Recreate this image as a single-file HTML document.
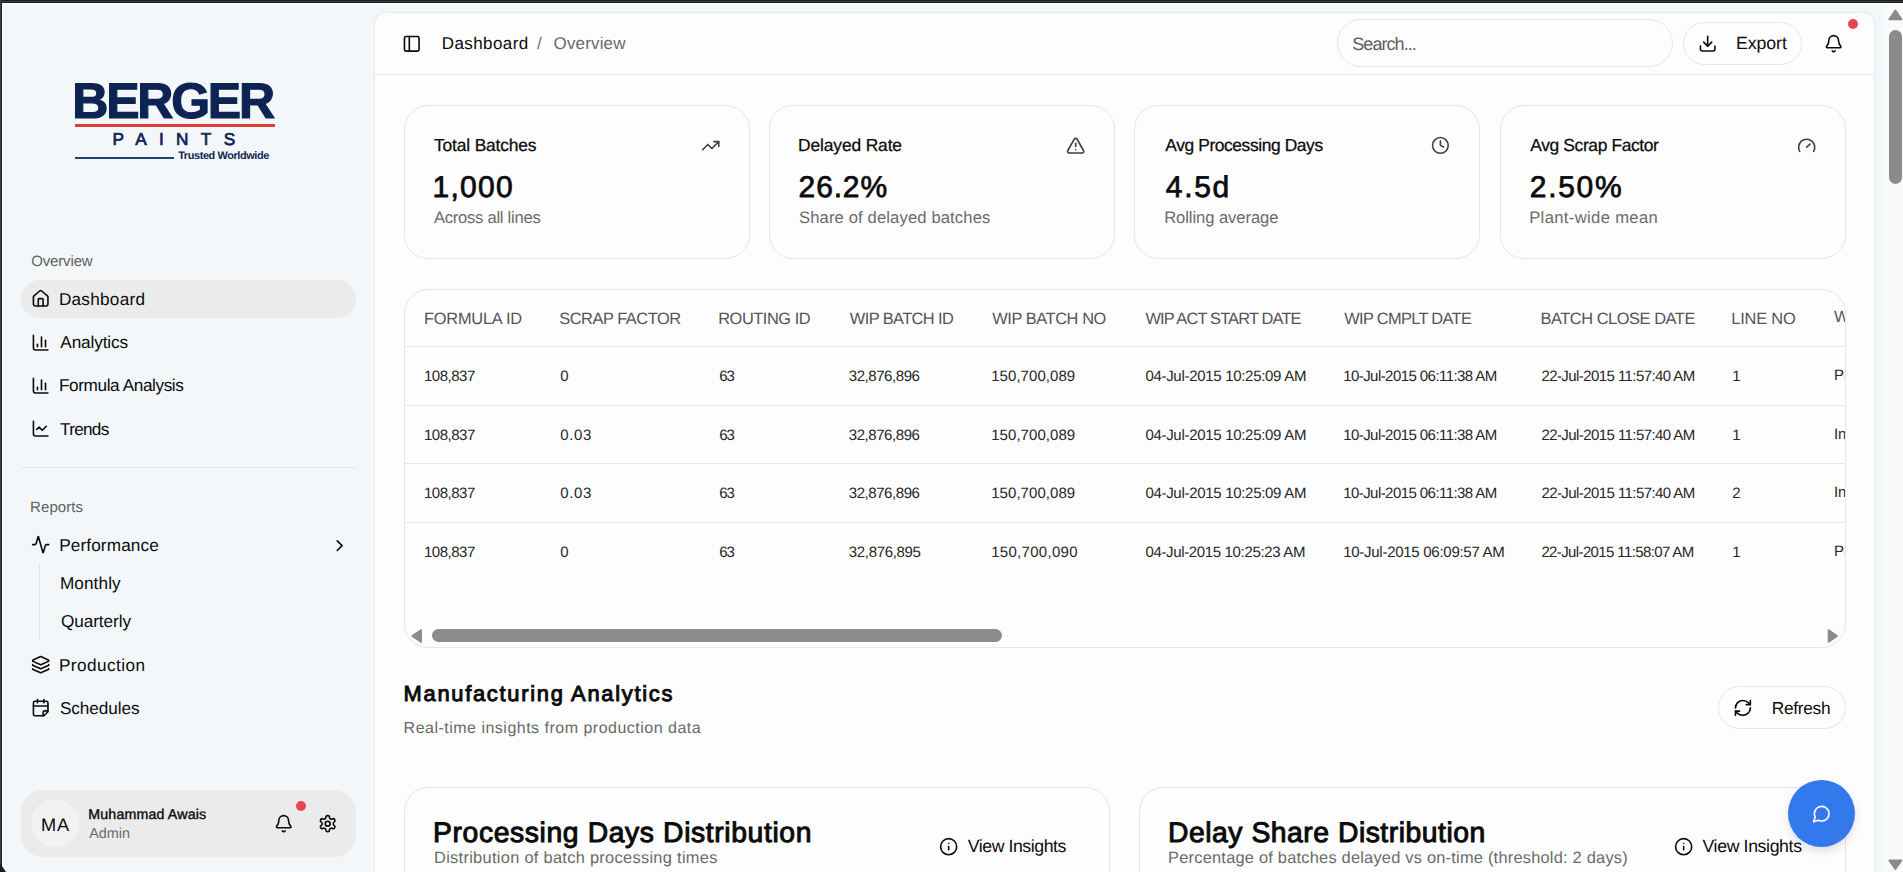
<!DOCTYPE html>
<html><head><meta charset="utf-8"><style>
html,body{margin:0;padding:0;}
body{width:1903px;height:872px;overflow:hidden;position:relative;background:#f4f7fa;font-family:"Liberation Sans",sans-serif;}
.abs{position:absolute;}
.t{position:absolute;white-space:nowrap;line-height:1;text-rendering:geometricPrecision;}
.ic{position:absolute;}
</style></head><body>
<div class="abs" style="left:374px;top:12px;width:1501px;height:900px;background:#fdfdfd;border:1px solid #eaebef;border-radius:12px;box-sizing:border-box;box-shadow:0 0 2px rgba(0,0,0,0.04)"></div>
<div class="abs" style="left:375px;top:74px;width:1499px;height:1px;background:#e6e6ee"></div>
<div class="abs" style="left:1884px;top:4px;width:19px;height:868px;background:#fafafa"></div>
<div class="abs" style="left:1889px;top:30px;width:13px;height:154px;background:#8b8b8b;border-radius:7px"></div>
<svg class="abs" style="left:1884px;top:4px" width="19" height="20"><path d="M11.4 6.6 L17.4 15.2 L5.4 15.2 Z" fill="#8b8b8b" stroke="#8b8b8b" stroke-width="2" stroke-linejoin="round"/></svg>
<svg class="abs" style="left:1884px;top:855px" width="19" height="17"><path d="M5.4 5.5 L17.4 5.5 L11.4 14 Z" fill="#8b8b8b" stroke="#8b8b8b" stroke-width="2" stroke-linejoin="round"/></svg>
<div class="abs" style="left:0;top:0;width:1903px;height:1px;background:#1e2022"></div>
<div class="abs" style="left:0;top:1px;width:1903px;height:1px;background:#3c3e3e"></div>
<div class="abs" style="left:0;top:2px;width:1903px;height:1px;background:#1b1c1e"></div>
<div class="abs" style="left:2px;top:3px;width:1901px;height:1px;background:#ffffff"></div>
<div class="abs" style="left:0;top:0;width:1px;height:872px;background:#3d3f3f"></div>
<div class="abs" style="left:1px;top:3px;width:1px;height:869px;background:#1f2123"></div>
<div class="abs" style="left:2px;top:3px;width:1px;height:869px;background:#ffffff"></div>
<svg class="abs" style="left:0;top:864px" width="8" height="8"><path d="M0 0 L2 0 L2 2 L6 8 L0 8 Z" fill="#1a1b1d"/></svg>
<svg class="ic" style="left:401.95px;top:33.75px;width:19.5px;height:19.5px;" viewBox="0 0 24 24" fill="none" stroke="#0b0b0b" stroke-width="2" stroke-linecap="round" stroke-linejoin="round"><rect width="18" height="18" x="3" y="3" rx="2"/><path d="M9 3v18"/></svg>
<div class="abs" style="left:1337px;top:19px;width:336px;height:48px;border:1px solid #e6e6e6;border-radius:24px;box-sizing:border-box;background:#fdfdfd"></div>
<div class="abs" style="left:1683px;top:22px;width:119px;height:43px;border:1px solid #e6e6e6;border-radius:22px;box-sizing:border-box;background:#fdfdfd"></div>
<svg class="ic" style="left:1697.82px;top:33.82px;width:19.36px;height:19.36px;" viewBox="0 0 24 24" fill="none" stroke="#0b0b0b" stroke-width="2" stroke-linecap="round" stroke-linejoin="round"><path d="M12 15V3"/><path d="M21 15v4a2 2 0 0 1-2 2H5a2 2 0 0 1-2-2v-4"/><path d="m7 10 5 5 5-5"/></svg>
<svg class="ic" style="left:1823.72px;top:33.92px;width:19.36px;height:19.36px;" viewBox="0 0 24 24" fill="none" stroke="#0b0b0b" stroke-width="2" stroke-linecap="round" stroke-linejoin="round"><path d="M10.268 21a2 2 0 0 0 3.464 0"/><path d="M3.262 15.326A1 1 0 0 0 4 17h16a1 1 0 0 0 .74-1.673C19.41 13.956 18 12.499 18 8A6 6 0 0 0 6 8c0 4.499-1.411 5.956-2.738 7.326"/></svg>
<div class="abs" style="left:1848px;top:18.8px;width:10px;height:10px;border-radius:50%;background:#e5484d"></div>
<div class="abs" style="left:21px;top:280px;width:335px;height:38px;border-radius:19px;background:#ebebeb"></div>
<svg class="ic" style="left:30.92px;top:288.52px;width:19.36px;height:19.36px;" viewBox="0 0 24 24" fill="none" stroke="#0b0b0b" stroke-width="2" stroke-linecap="round" stroke-linejoin="round"><path d="M15 21v-8a1 1 0 0 0-1-1h-4a1 1 0 0 0-1 1v8"/><path d="M3 10a2 2 0 0 1 .709-1.528l7-5.999a2 2 0 0 1 2.582 0l7 5.999A2 2 0 0 1 21 10v9a2 2 0 0 1-2 2H5a2 2 0 0 1-2-2z"/></svg>
<svg class="ic" style="left:30.92px;top:332.72px;width:19.36px;height:19.36px;" viewBox="0 0 24 24" fill="none" stroke="#0b0b0b" stroke-width="2" stroke-linecap="round" stroke-linejoin="round"><path d="M3 3v16a2 2 0 0 0 2 2h16"/><path d="M18 17V9"/><path d="M13 17V5"/><path d="M8 17v-3"/></svg>
<svg class="ic" style="left:30.92px;top:375.52px;width:19.36px;height:19.36px;" viewBox="0 0 24 24" fill="none" stroke="#0b0b0b" stroke-width="2" stroke-linecap="round" stroke-linejoin="round"><path d="M3 3v16a2 2 0 0 0 2 2h16"/><path d="M18 17V9"/><path d="M13 17V5"/><path d="M8 17v-3"/></svg>
<svg class="ic" style="left:30.92px;top:418.72px;width:19.36px;height:19.36px;" viewBox="0 0 24 24" fill="none" stroke="#0b0b0b" stroke-width="2" stroke-linecap="round" stroke-linejoin="round"><path d="M3 3v16a2 2 0 0 0 2 2h16"/><path d="m19 9-5 5-4-4-3 3"/></svg>
<div class="abs" style="left:21px;top:467px;width:335px;height:1px;background:#e3e6ea"></div>
<svg class="ic" style="left:30.82px;top:535.22px;width:19.36px;height:19.36px;" viewBox="0 0 24 24" fill="none" stroke="#0b0b0b" stroke-width="2" stroke-linecap="round" stroke-linejoin="round"><path d="M22 12h-2.48a2 2 0 0 0-1.93 1.46l-2.35 8.36a.25.25 0 0 1-.48 0L9.24 2.18a.25.25 0 0 0-.48 0l-2.35 8.36A2 2 0 0 1 4.49 12H2"/></svg>
<svg class="ic" style="left:330.22px;top:535.62px;width:19.36px;height:19.36px;" viewBox="0 0 24 24" fill="none" stroke="#0b0b0b" stroke-width="2" stroke-linecap="round" stroke-linejoin="round"><path d="m9 18 6-6-6-6"/></svg>
<div class="abs" style="left:39px;top:564px;width:1px;height:77px;background:#e2e4e8"></div>
<svg class="ic" style="left:30.92px;top:654.92px;width:19.36px;height:19.36px;" viewBox="0 0 24 24" fill="none" stroke="#0b0b0b" stroke-width="2" stroke-linecap="round" stroke-linejoin="round"><path d="M12.83 2.18a2 2 0 0 0-1.66 0L2.6 6.08a1 1 0 0 0 0 1.83l8.58 3.91a2 2 0 0 0 1.66 0l8.58-3.9a1 1 0 0 0 0-1.83z"/><path d="M2 12a1 1 0 0 0 .58.91l8.6 3.91a2 2 0 0 0 1.65 0l8.58-3.9A1 1 0 0 0 22 12"/><path d="M2 17a1 1 0 0 0 .58.91l8.6 3.91a2 2 0 0 0 1.65 0l8.58-3.9A1 1 0 0 0 22 17"/></svg>
<svg class="ic" style="left:31.02px;top:697.82px;width:19.36px;height:19.36px;" viewBox="0 0 24 24" fill="none" stroke="#0b0b0b" stroke-width="2" stroke-linecap="round" stroke-linejoin="round"><path d="M8 2v4"/><path d="M16 2v4"/><path d="M21 17V6a2 2 0 0 0-2-2H5a2 2 0 0 0-2 2v14a2 2 0 0 0 2 2h11Z"/><path d="M3 10h18"/><path d="M15 22v-4a2 2 0 0 1 2-2h4"/></svg>
<div class="abs" style="left:21px;top:790px;width:335px;height:67px;border-radius:22px;background:#ebebeb"></div>
<div class="abs" style="left:31px;top:799px;width:48px;height:48px;border-radius:50%;background:#f2f2f2"></div>
<svg class="ic" style="left:273.82px;top:814.02px;width:19.36px;height:19.36px;" viewBox="0 0 24 24" fill="none" stroke="#0b0b0b" stroke-width="2" stroke-linecap="round" stroke-linejoin="round"><path d="M10.268 21a2 2 0 0 0 3.464 0"/><path d="M3.262 15.326A1 1 0 0 0 4 17h16a1 1 0 0 0 .74-1.673C19.41 13.956 18 12.499 18 8A6 6 0 0 0 6 8c0 4.499-1.411 5.956-2.738 7.326"/></svg>
<svg class="ic" style="left:317.82px;top:814.02px;width:19.36px;height:19.36px;" viewBox="0 0 24 24" fill="none" stroke="#0b0b0b" stroke-width="2" stroke-linecap="round" stroke-linejoin="round"><path d="M12.22 2h-.44a2 2 0 0 0-2 2v.18a2 2 0 0 1-1 1.73l-.43.25a2 2 0 0 1-2 0l-.15-.08a2 2 0 0 0-2.73.73l-.22.38a2 2 0 0 0 .73 2.73l.15.1a2 2 0 0 1 1 1.72v.51a2 2 0 0 1-1 1.74l-.15.09a2 2 0 0 0-.73 2.73l.22.38a2 2 0 0 0 2.73.73l.15-.08a2 2 0 0 1 2 0l.43.25a2 2 0 0 1 1 1.73V20a2 2 0 0 0 2 2h.44a2 2 0 0 0 2-2v-.18a2 2 0 0 1 1-1.73l.43-.25a2 2 0 0 1 2 0l.15.08a2 2 0 0 0 2.73-.73l.22-.39a2 2 0 0 0-.73-2.73l-.15-.08a2 2 0 0 1-1-1.74v-.5a2 2 0 0 1 1-1.74l.15-.09a2 2 0 0 0 .73-2.73l-.22-.38a2 2 0 0 0-2.73-.73l-.15.08a2 2 0 0 1-2 0l-.43-.25a2 2 0 0 1-1-1.73V4a2 2 0 0 0-2-2z"/><circle cx="12" cy="12" r="3"/></svg>
<div class="abs" style="left:296px;top:801.4px;width:10px;height:10px;border-radius:50%;background:#e5484d"></div>
<div class="abs" style="left:75px;top:124px;width:199.5px;height:2.5px;background:#e23b3b"></div>
<div class="abs" style="left:75px;top:156.5px;width:99.2px;height:2.1px;background:#263f72"></div>
<div class="abs" style="left:404px;top:104.5px;width:346px;height:154px;border:1px solid #e5e5ee;border-radius:24px;box-sizing:border-box;background:#fdfdfd"></div>
<div class="abs" style="left:769px;top:104.5px;width:346px;height:154px;border:1px solid #e5e5ee;border-radius:24px;box-sizing:border-box;background:#fdfdfd"></div>
<div class="abs" style="left:1134px;top:104.5px;width:346px;height:154px;border:1px solid #e5e5ee;border-radius:24px;box-sizing:border-box;background:#fdfdfd"></div>
<div class="abs" style="left:1500px;top:104.5px;width:346px;height:154px;border:1px solid #e5e5ee;border-radius:24px;box-sizing:border-box;background:#fdfdfd"></div>
<svg class="ic" style="left:701.02px;top:135.82px;width:19.36px;height:19.36px;" viewBox="0 0 24 24" fill="none" stroke="#3f3f3f" stroke-width="2" stroke-linecap="round" stroke-linejoin="round"><path d="M16 7h6v6"/><path d="m22 7-8.5 8.5-5-5L2 17"/></svg>
<svg class="ic" style="left:1065.92px;top:135.72px;width:19.36px;height:19.36px;" viewBox="0 0 24 24" fill="none" stroke="#3f3f3f" stroke-width="2" stroke-linecap="round" stroke-linejoin="round"><path d="m21.73 18-8-14a2 2 0 0 0-3.48 0l-8 14A2 2 0 0 0 4 21h16a2 2 0 0 0 1.73-3"/><path d="M12 9v4"/><path d="M12 17h.01"/></svg>
<svg class="ic" style="left:1431.10px;top:136.00px;width:18.8px;height:18.8px;" viewBox="0 0 24 24" fill="none" stroke="#3f3f3f" stroke-width="2" stroke-linecap="round" stroke-linejoin="round"><circle cx="12" cy="12" r="10"/><path d="M12 6v6l4 2"/></svg>
<svg class="ic" style="left:1797.02px;top:135.72px;width:19.36px;height:19.36px;" viewBox="0 0 24 24" fill="none" stroke="#3f3f3f" stroke-width="2" stroke-linecap="round" stroke-linejoin="round"><path d="m12 14 4-4"/><path d="M3.34 19a10 10 0 1 1 17.32 0"/></svg>
<div class="abs" style="left:404px;top:288.5px;width:1442px;height:359.5px;border:1px solid #e5e5ee;border-radius:24px;box-sizing:border-box;background:#fdfdfd"></div>
<div class="abs" style="left:405px;top:346px;width:1440px;height:1px;background:#e6e6ee"></div>
<div class="abs" style="left:405px;top:404.8px;width:1440px;height:1px;background:#e6e6ee"></div>
<div class="abs" style="left:405px;top:463px;width:1440px;height:1px;background:#e6e6ee"></div>
<div class="abs" style="left:405px;top:522.4px;width:1440px;height:1px;background:#e6e6ee"></div>
<svg class="abs" style="left:404px;top:620px" width="1442" height="28"><path d="M8.2 16 L17.2 10 L17.2 22 Z" fill="#8b8b8b" stroke="#8b8b8b" stroke-width="1.6" stroke-linejoin="round"/><rect x="28" y="9" width="570" height="13" rx="6.5" fill="#8b8b8b"/><path d="M1433 16 L1424.5 10 L1424.5 22 Z" fill="#8b8b8b" stroke="#8b8b8b" stroke-width="1.6" stroke-linejoin="round"/></svg>
<div class="abs" style="left:1718px;top:686px;width:128px;height:43px;border:1px solid #e6e6e6;border-radius:22px;box-sizing:border-box;background:#fdfdfd"></div>
<svg class="ic" style="left:1732.80px;top:697.50px;width:19.8px;height:19.8px;" viewBox="0 0 24 24" fill="none" stroke="#0b0b0b" stroke-width="2" stroke-linecap="round" stroke-linejoin="round"><path d="M3 12a9 9 0 0 1 9-9 9.75 9.75 0 0 1 6.74 2.74L21 8"/><path d="M21 3v5h-5"/><path d="M21 12a9 9 0 0 1-9 9 9.75 9.75 0 0 1-6.74-2.74L3 16"/><path d="M8 16H3v5"/></svg>
<div class="abs" style="left:404px;top:787px;width:706px;height:200px;border:1px solid #e5e5ee;border-radius:24px;box-sizing:border-box;background:#fdfdfd"></div>
<div class="abs" style="left:1139px;top:787px;width:707px;height:200px;border:1px solid #e5e5ee;border-radius:24px;box-sizing:border-box;background:#fdfdfd"></div>
<svg class="ic" style="left:938.85px;top:836.85px;width:19.3px;height:19.3px;" viewBox="0 0 24 24" fill="none" stroke="#0b0b0b" stroke-width="2" stroke-linecap="round" stroke-linejoin="round"><circle cx="12" cy="12" r="10"/><path d="M12 16v-4"/><path d="M12 8h.01"/></svg>
<svg class="ic" style="left:1674.05px;top:836.85px;width:19.3px;height:19.3px;" viewBox="0 0 24 24" fill="none" stroke="#0b0b0b" stroke-width="2" stroke-linecap="round" stroke-linejoin="round"><circle cx="12" cy="12" r="10"/><path d="M12 16v-4"/><path d="M12 8h.01"/></svg>
<div class="t" id="bc1" style="left:441.80px;top:34.71px;font-size:17.0px;font-weight:400;color:#0b0b0b;letter-spacing:0.400px;">Dashboard</div>
<div class="t" id="bcsep" style="left:536.90px;top:34.91px;font-size:17.0px;font-weight:400;color:#6f6f6f;letter-spacing:0.000px;">/</div>
<div class="t" id="bc2" style="left:553.60px;top:34.61px;font-size:17.0px;font-weight:400;color:#6b6b6b;letter-spacing:0.143px;">Overview</div>
<div class="t" id="search" style="left:1352.30px;top:34.76px;font-size:18.0px;font-weight:400;color:#606060;letter-spacing:-0.944px;">Search...</div>
<div class="t" id="export" style="left:1735.90px;top:35.01px;font-size:17.7px;font-weight:400;color:#0b0b0b;letter-spacing:-0.040px;">Export</div>
<div class="t" id="berger" style="left:72.30px;top:75.86px;font-size:50.0px;font-weight:700;color:#0d2453;letter-spacing:-2.240px;-webkit-text-stroke:1.2px #0d2453;">BERGER</div>
<div class="t" id="paints" style="left:112.60px;top:131.44px;font-size:17.2px;font-weight:400;color:#0d2453;letter-spacing:12.360px;-webkit-text-stroke:0.7px #0d2453;">PAINTS</div>
<div class="t" id="trusted" style="left:178.20px;top:150.97px;font-size:10.9px;font-weight:700;color:#0d2453;letter-spacing:-0.383px;">Trusted Worldwide</div>
<div class="t" id="lbl_ov" style="left:31.20px;top:253.60px;font-size:15.0px;font-weight:400;color:#5e5e5e;letter-spacing:-0.142px;">Overview</div>
<div class="t" id="nav_dash" style="left:58.90px;top:290.94px;font-size:17.2px;font-weight:400;color:#0b0b0b;letter-spacing:0.250px;">Dashboard</div>
<div class="t" id="nav_an" style="left:60.30px;top:333.54px;font-size:17.2px;font-weight:400;color:#0b0b0b;letter-spacing:-0.125px;">Analytics</div>
<div class="t" id="nav_fa" style="left:59.00px;top:376.84px;font-size:17.2px;font-weight:400;color:#0b0b0b;letter-spacing:-0.400px;">Formula Analysis</div>
<div class="t" id="nav_tr" style="left:60.00px;top:420.54px;font-size:17.2px;font-weight:400;color:#0b0b0b;letter-spacing:-0.720px;">Trends</div>
<div class="t" id="lbl_rep" style="left:30.10px;top:499.60px;font-size:15.0px;font-weight:400;color:#5e5e5e;letter-spacing:0.068px;">Reports</div>
<div class="t" id="nav_perf" style="left:59.20px;top:536.54px;font-size:17.2px;font-weight:400;color:#0b0b0b;letter-spacing:0.120px;">Performance</div>
<div class="t" id="nav_mon" style="left:59.90px;top:575.44px;font-size:17.2px;font-weight:400;color:#0b0b0b;letter-spacing:0.099px;">Monthly</div>
<div class="t" id="nav_q" style="left:60.90px;top:613.44px;font-size:17.2px;font-weight:400;color:#0b0b0b;letter-spacing:-0.069px;">Quarterly</div>
<div class="t" id="nav_prod" style="left:58.90px;top:656.54px;font-size:17.2px;font-weight:400;color:#0b0b0b;letter-spacing:0.444px;">Production</div>
<div class="t" id="nav_sch" style="left:59.90px;top:699.74px;font-size:17.2px;font-weight:400;color:#0b0b0b;letter-spacing:-0.075px;">Schedules</div>
<div class="t" id="ma" style="left:41.00px;top:815.79px;font-size:18.2px;font-weight:400;color:#0b0b0b;letter-spacing:0.800px;">MA</div>
<div class="t" id="uname" style="left:88.30px;top:807.98px;font-size:14.2px;font-weight:400;color:#0b0b0b;letter-spacing:0.167px;-webkit-text-stroke:0.4px #0b0b0b;">Muhammad Awais</div>
<div class="t" id="urole" style="left:89.30px;top:826.91px;font-size:14.4px;font-weight:400;color:#6a6a6a;letter-spacing:-0.050px;">Admin</div>
<div class="t" id="c0t" style="left:434.00px;top:136.97px;font-size:17.4px;font-weight:400;color:#0b0b0b;letter-spacing:-0.153px;-webkit-text-stroke:0.25px #0b0b0b;">Total Batches</div>
<div class="t" id="c0v" style="left:432.50px;top:173.30px;font-size:30.0px;font-weight:400;color:#0b0b0b;letter-spacing:1.300px;-webkit-text-stroke:0.75px #0b0b0b;">1,000</div>
<div class="t" id="c0s" style="left:433.90px;top:210.04px;font-size:16.6px;font-weight:400;color:#6a6a6a;letter-spacing:-0.255px;">Across all lines</div>
<div class="t" id="c1t" style="left:798.10px;top:136.97px;font-size:17.4px;font-weight:400;color:#0b0b0b;letter-spacing:-0.130px;-webkit-text-stroke:0.25px #0b0b0b;">Delayed Rate</div>
<div class="t" id="c1v" style="left:798.60px;top:173.30px;font-size:30.0px;font-weight:400;color:#0b0b0b;letter-spacing:0.850px;-webkit-text-stroke:0.75px #0b0b0b;">26.2%</div>
<div class="t" id="c1s" style="left:799.00px;top:210.04px;font-size:16.6px;font-weight:400;color:#6a6a6a;letter-spacing:0.136px;">Share of delayed batches</div>
<div class="t" id="c2t" style="left:1165.30px;top:136.97px;font-size:17.4px;font-weight:400;color:#0b0b0b;letter-spacing:-0.399px;-webkit-text-stroke:0.25px #0b0b0b;">Avg Processing Days</div>
<div class="t" id="c2v" style="left:1165.80px;top:173.30px;font-size:30.0px;font-weight:400;color:#0b0b0b;letter-spacing:1.667px;-webkit-text-stroke:0.75px #0b0b0b;">4.5d</div>
<div class="t" id="c2s" style="left:1164.20px;top:210.04px;font-size:16.6px;font-weight:400;color:#6a6a6a;letter-spacing:-0.072px;">Rolling average</div>
<div class="t" id="c3t" style="left:1530.30px;top:136.97px;font-size:17.4px;font-weight:400;color:#0b0b0b;letter-spacing:-0.361px;-webkit-text-stroke:0.25px #0b0b0b;">Avg Scrap Factor</div>
<div class="t" id="c3v" style="left:1529.80px;top:173.30px;font-size:30.0px;font-weight:400;color:#0b0b0b;letter-spacing:1.700px;-webkit-text-stroke:0.75px #0b0b0b;">2.50%</div>
<div class="t" id="c3s" style="left:1529.20px;top:210.04px;font-size:16.6px;font-weight:400;color:#6a6a6a;letter-spacing:0.356px;">Plant-wide mean</div>
<div class="t" id="h0" style="left:424.00px;top:310.51px;font-size:16.4px;font-weight:400;color:#545454;letter-spacing:-0.222px;">FORMULA ID</div>
<div class="t" id="h1" style="left:559.20px;top:310.51px;font-size:16.4px;font-weight:400;color:#545454;letter-spacing:-0.454px;">SCRAP FACTOR</div>
<div class="t" id="h2" style="left:718.20px;top:310.51px;font-size:16.4px;font-weight:400;color:#545454;letter-spacing:-0.444px;">ROUTING ID</div>
<div class="t" id="h3" style="left:849.80px;top:310.51px;font-size:16.4px;font-weight:400;color:#545454;letter-spacing:-0.580px;">WIP BATCH ID</div>
<div class="t" id="h4" style="left:992.20px;top:310.51px;font-size:16.4px;font-weight:400;color:#545454;letter-spacing:-0.415px;">WIP BATCH NO</div>
<div class="t" id="h5" style="left:1145.40px;top:310.51px;font-size:16.4px;font-weight:400;color:#545454;letter-spacing:-0.836px;">WIP ACT START DATE</div>
<div class="t" id="h6" style="left:1344.20px;top:310.51px;font-size:16.4px;font-weight:400;color:#545454;letter-spacing:-0.666px;">WIP CMPLT DATE</div>
<div class="t" id="h7" style="left:1540.40px;top:310.51px;font-size:16.4px;font-weight:400;color:#545454;letter-spacing:-0.439px;">BATCH CLOSE DATE</div>
<div class="t" id="h8" style="left:1731.30px;top:310.51px;font-size:16.4px;font-weight:400;color:#545454;letter-spacing:-0.203px;">LINE NO</div>
<div class="t" id="r0c0" style="left:424.00px;top:369.30px;font-size:15.0px;font-weight:400;color:#262626;letter-spacing:-0.500px;">108,837</div>
<div class="t" id="r0c1" style="left:560.20px;top:369.30px;font-size:15.0px;font-weight:400;color:#262626;letter-spacing:0.000px;">0</div>
<div class="t" id="r0c2" style="left:719.20px;top:369.30px;font-size:15.0px;font-weight:400;color:#262626;letter-spacing:-1.000px;">63</div>
<div class="t" id="r0c3" style="left:848.80px;top:369.30px;font-size:15.0px;font-weight:400;color:#262626;letter-spacing:-0.444px;">32,876,896</div>
<div class="t" id="r0c4" style="left:991.20px;top:369.30px;font-size:15.0px;font-weight:400;color:#262626;letter-spacing:0.060px;">150,700,089</div>
<div class="t" id="r0c5" style="left:1145.40px;top:369.30px;font-size:15.0px;font-weight:400;color:#262626;letter-spacing:-0.301px;">04-Jul-2015 10:25:09 AM</div>
<div class="t" id="r0c6" style="left:1343.20px;top:369.30px;font-size:15.0px;font-weight:400;color:#262626;letter-spacing:-0.563px;">10-Jul-2015 06:11:38 AM</div>
<div class="t" id="r0c7" style="left:1541.40px;top:369.30px;font-size:15.0px;font-weight:400;color:#262626;letter-spacing:-0.574px;">22-Jul-2015 11:57:40 AM</div>
<div class="t" id="r0c8" style="left:1732.30px;top:369.30px;font-size:15.0px;font-weight:400;color:#262626;letter-spacing:0.000px;">1</div>
<div class="t" id="r1c0" style="left:424.00px;top:428.30px;font-size:15.0px;font-weight:400;color:#262626;letter-spacing:-0.500px;">108,837</div>
<div class="t" id="r1c1" style="left:560.20px;top:428.30px;font-size:15.0px;font-weight:400;color:#262626;letter-spacing:0.667px;">0.03</div>
<div class="t" id="r1c2" style="left:719.20px;top:428.30px;font-size:15.0px;font-weight:400;color:#262626;letter-spacing:-1.000px;">63</div>
<div class="t" id="r1c3" style="left:848.80px;top:428.30px;font-size:15.0px;font-weight:400;color:#262626;letter-spacing:-0.444px;">32,876,896</div>
<div class="t" id="r1c4" style="left:991.20px;top:428.30px;font-size:15.0px;font-weight:400;color:#262626;letter-spacing:0.060px;">150,700,089</div>
<div class="t" id="r1c5" style="left:1145.40px;top:428.30px;font-size:15.0px;font-weight:400;color:#262626;letter-spacing:-0.301px;">04-Jul-2015 10:25:09 AM</div>
<div class="t" id="r1c6" style="left:1343.20px;top:428.30px;font-size:15.0px;font-weight:400;color:#262626;letter-spacing:-0.563px;">10-Jul-2015 06:11:38 AM</div>
<div class="t" id="r1c7" style="left:1541.40px;top:428.30px;font-size:15.0px;font-weight:400;color:#262626;letter-spacing:-0.574px;">22-Jul-2015 11:57:40 AM</div>
<div class="t" id="r1c8" style="left:1732.30px;top:428.30px;font-size:15.0px;font-weight:400;color:#262626;letter-spacing:0.000px;">1</div>
<div class="t" id="r2c0" style="left:424.00px;top:486.30px;font-size:15.0px;font-weight:400;color:#262626;letter-spacing:-0.500px;">108,837</div>
<div class="t" id="r2c1" style="left:560.20px;top:486.30px;font-size:15.0px;font-weight:400;color:#262626;letter-spacing:0.667px;">0.03</div>
<div class="t" id="r2c2" style="left:719.20px;top:486.30px;font-size:15.0px;font-weight:400;color:#262626;letter-spacing:-1.000px;">63</div>
<div class="t" id="r2c3" style="left:848.80px;top:486.30px;font-size:15.0px;font-weight:400;color:#262626;letter-spacing:-0.444px;">32,876,896</div>
<div class="t" id="r2c4" style="left:991.20px;top:486.30px;font-size:15.0px;font-weight:400;color:#262626;letter-spacing:0.060px;">150,700,089</div>
<div class="t" id="r2c5" style="left:1145.40px;top:486.30px;font-size:15.0px;font-weight:400;color:#262626;letter-spacing:-0.301px;">04-Jul-2015 10:25:09 AM</div>
<div class="t" id="r2c6" style="left:1343.20px;top:486.30px;font-size:15.0px;font-weight:400;color:#262626;letter-spacing:-0.563px;">10-Jul-2015 06:11:38 AM</div>
<div class="t" id="r2c7" style="left:1541.40px;top:486.30px;font-size:15.0px;font-weight:400;color:#262626;letter-spacing:-0.574px;">22-Jul-2015 11:57:40 AM</div>
<div class="t" id="r2c8" style="left:1732.30px;top:486.30px;font-size:15.0px;font-weight:400;color:#262626;letter-spacing:0.000px;">2</div>
<div class="t" id="r3c0" style="left:424.00px;top:545.30px;font-size:15.0px;font-weight:400;color:#262626;letter-spacing:-0.500px;">108,837</div>
<div class="t" id="r3c1" style="left:560.20px;top:545.30px;font-size:15.0px;font-weight:400;color:#262626;letter-spacing:0.000px;">0</div>
<div class="t" id="r3c2" style="left:719.20px;top:545.30px;font-size:15.0px;font-weight:400;color:#262626;letter-spacing:-1.000px;">63</div>
<div class="t" id="r3c3" style="left:848.80px;top:545.30px;font-size:15.0px;font-weight:400;color:#262626;letter-spacing:-0.332px;">32,876,895</div>
<div class="t" id="r3c4" style="left:991.20px;top:545.30px;font-size:15.0px;font-weight:400;color:#262626;letter-spacing:0.300px;">150,700,090</div>
<div class="t" id="r3c5" style="left:1145.40px;top:545.30px;font-size:15.0px;font-weight:400;color:#262626;letter-spacing:-0.346px;">04-Jul-2015 10:25:23 AM</div>
<div class="t" id="r3c6" style="left:1343.20px;top:545.30px;font-size:15.0px;font-weight:400;color:#262626;letter-spacing:-0.273px;">10-Jul-2015 06:09:57 AM</div>
<div class="t" id="r3c7" style="left:1541.40px;top:545.30px;font-size:15.0px;font-weight:400;color:#262626;letter-spacing:-0.620px;">22-Jul-2015 11:58:07 AM</div>
<div class="t" id="r3c8" style="left:1732.30px;top:545.30px;font-size:15.0px;font-weight:400;color:#262626;letter-spacing:0.000px;">1</div>
<div class="t" id="sec_t" style="left:403.60px;top:682.66px;font-size:21.9px;font-weight:400;color:#0b0b0b;letter-spacing:1.709px;-webkit-text-stroke:0.95px #0b0b0b;">Manufacturing Analytics</div>
<div class="t" id="sec_s" style="left:403.60px;top:720.85px;font-size:16.0px;font-weight:400;color:#6a6a6a;letter-spacing:0.491px;">Real-time insights from production data</div>
<div class="t" id="refresh" style="left:1771.70px;top:699.75px;font-size:17.3px;font-weight:400;color:#0b0b0b;letter-spacing:-0.268px;">Refresh</div>
<div class="t" id="ch1t" style="left:433.00px;top:818.04px;font-size:28.3px;font-weight:400;color:#0b0b0b;letter-spacing:0.619px;-webkit-text-stroke:1.0px #0b0b0b;">Processing Days Distribution</div>
<div class="t" id="ch1s" style="left:434.00px;top:849.81px;font-size:16.4px;font-weight:400;color:#6a6a6a;letter-spacing:0.297px;">Distribution of batch processing times</div>
<div class="t" id="ch1v" style="left:967.70px;top:838.41px;font-size:17.7px;font-weight:400;color:#0b0b0b;letter-spacing:-0.431px;">View Insights</div>
<div class="t" id="ch2t" style="left:1168.10px;top:818.04px;font-size:28.3px;font-weight:400;color:#0b0b0b;letter-spacing:0.521px;-webkit-text-stroke:1.0px #0b0b0b;">Delay Share Distribution</div>
<div class="t" id="ch2s" style="left:1168.10px;top:850.41px;font-size:16.4px;font-weight:400;color:#6a6a6a;letter-spacing:0.223px;">Percentage of batches delayed vs on-time (threshold: 2 days)</div>
<div class="t" id="ch2v" style="left:1702.50px;top:838.41px;font-size:17.7px;font-weight:400;color:#0b0b0b;letter-spacing:-0.368px;">View Insights</div>
<div class="abs" style="left:1830px;top:300px;width:15px;height:270px;overflow:hidden"><div class="t" style="left:3.9px;top:9.41px;font-size:16.4px;color:#545454;text-rendering:geometricPrecision">WIP</div><div class="t" style="left:3.9px;top:67.96px;font-size:15px;color:#262626;text-rendering:geometricPrecision">Pr</div><div class="t" style="left:3.9px;top:126.96px;font-size:15px;color:#262626;text-rendering:geometricPrecision">In</div><div class="t" style="left:3.9px;top:184.96px;font-size:15px;color:#262626;text-rendering:geometricPrecision">In</div><div class="t" style="left:3.9px;top:243.96px;font-size:15px;color:#262626;text-rendering:geometricPrecision">Pr</div></div>
<div class="abs" style="left:1788.2px;top:780px;width:67px;height:67px;border-radius:50%;background:#3478ee;box-shadow:0 4px 10px rgba(0,0,0,0.12)"></div>
<svg class="ic" style="left:1811.90px;top:804.20px;width:19.4px;height:19.4px;" viewBox="0 0 24 24" fill="none" stroke="#ffffff" stroke-width="2" stroke-linecap="round" stroke-linejoin="round"><path d="M7.9 20A9 9 0 1 0 4 16.1L2 22Z"/></svg>
</body></html>
